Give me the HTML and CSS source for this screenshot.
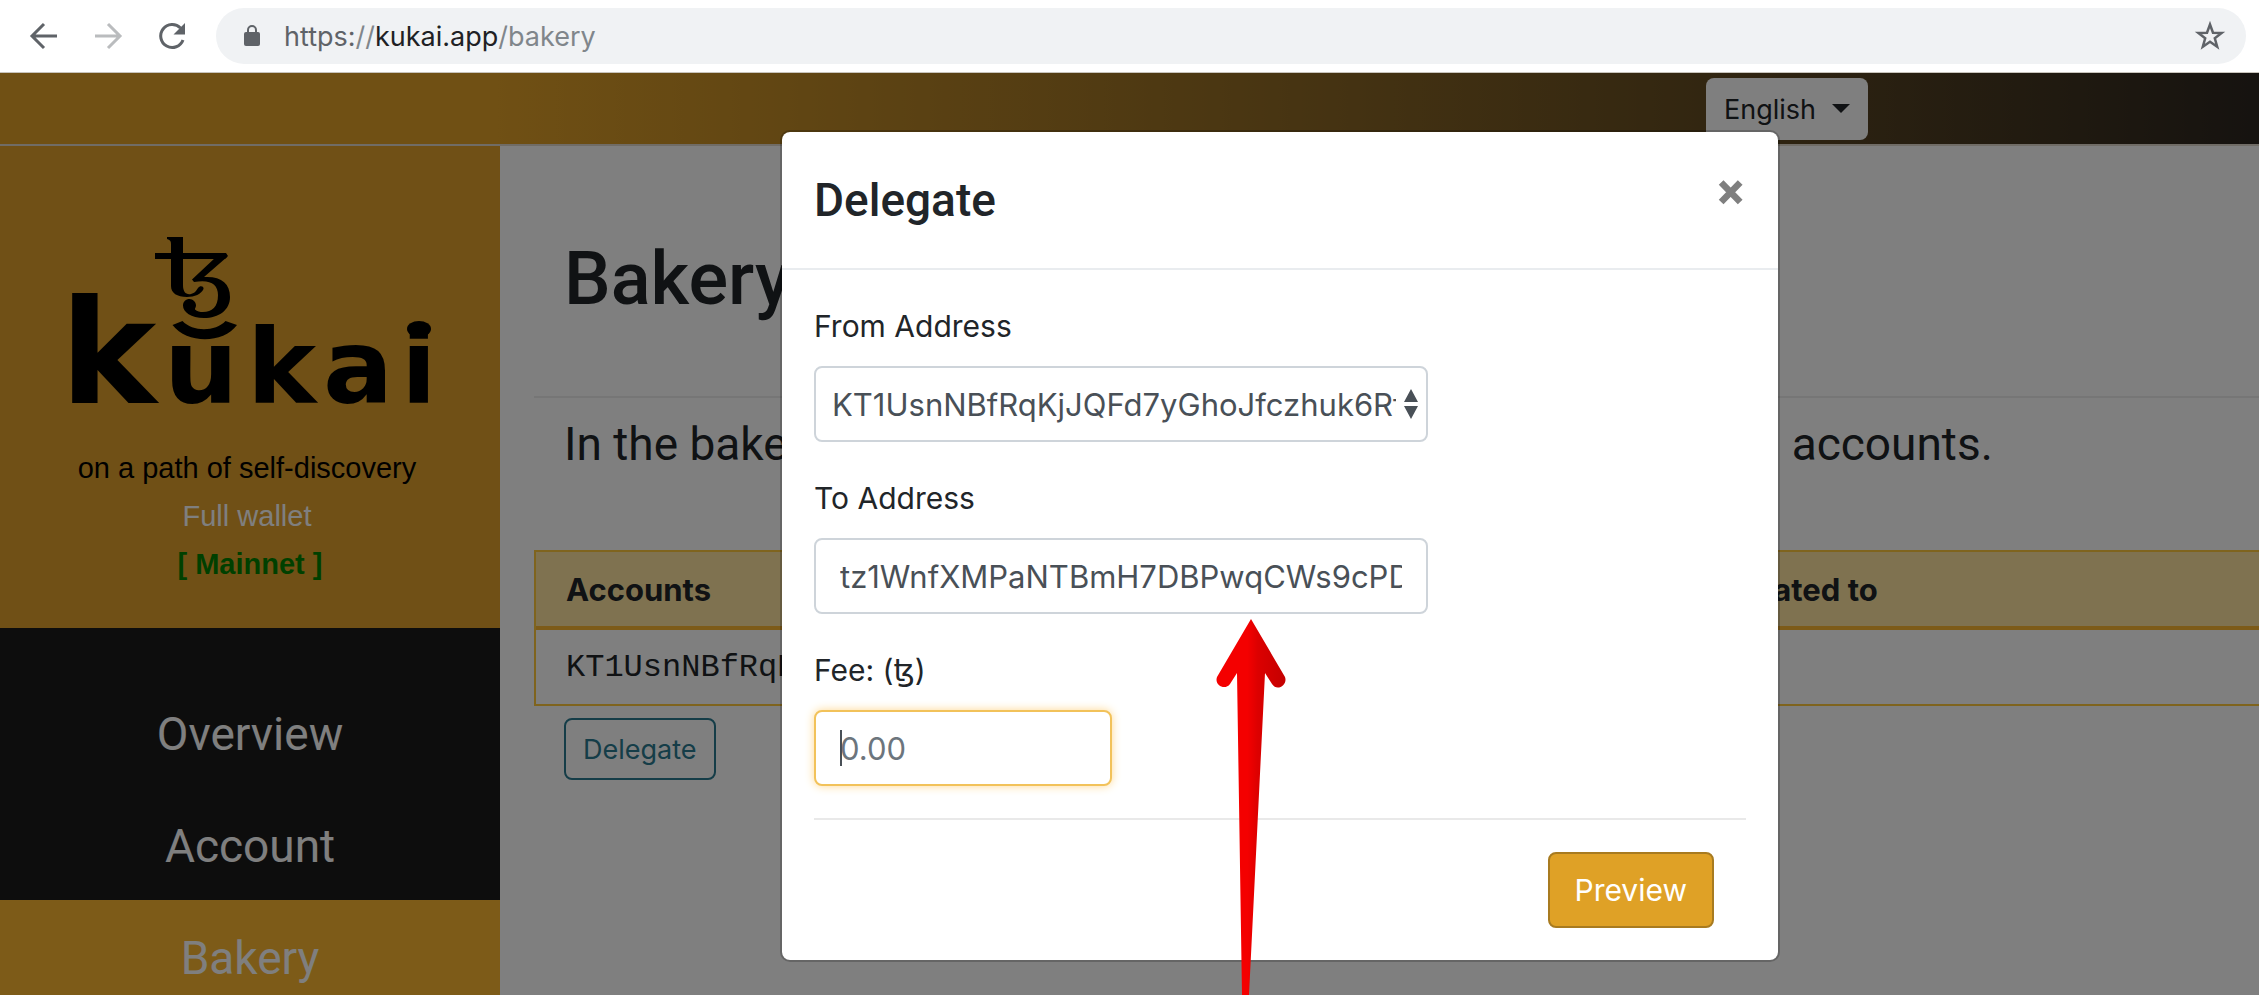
FILE: index.html
```html
<!DOCTYPE html>
<html lang="en">
<head>
    <meta charset="UTF-8">
    <meta name="viewport" content="width=device-width, initial-scale=1.0">
    <title>Kukai - Bakery</title>
    <link rel="stylesheet" href="styles.css">
</head>
<body>
    <div class="toolbar">
        <button class="tool-button" type="button" aria-label="Back">
            <svg width="32" height="32" viewBox="0 0 32 32"><path d="M29 16H4M16 4L4 16l12 12" fill="none" stroke="#5f6368" stroke-width="3"/></svg>
        </button>
        <button class="tool-button" type="button" aria-label="Forward">
            <svg width="32" height="32" viewBox="0 0 32 32"><path d="M3 16h25M16 4l12 12-12 12" fill="none" stroke="#babcbe" stroke-width="3"/></svg>
        </button>
        <button class="tool-button" type="button" aria-label="Reload">
            <svg width="32" height="32" viewBox="0 0 32 32"><path d="M27 20a11.500 11.500 0 1 1-2.500-12" fill="none" stroke="#5f6368" stroke-width="3"/><path d="M29 3v11.500H17.500z" fill="#5f6368"/></svg>
        </button>
        <div class="omnibox">
            <svg width="18" height="24" viewBox="0 0 18 24"><rect x="1" y="8" width="16" height="14" rx="2" fill="#5f6368"/><path d="M5 9V6a4 4 0 0 1 8 0v3" fill="none" stroke="#5f6368" stroke-width="2"/></svg>
            <div class="url">https:<span class="url-path">//</span><span class="url-host">kukai.app</span><span class="url-path">/bakery</span></div>
            <svg width="32" height="32" viewBox="0 0 32 32"><path d="M16 4.500l3 8.200 8.700.3-6.900 5.300 2.400 8.400-7.200-4.900-7.200 4.900 2.400-8.400-6.900-5.300 8.700-.3z" fill="none" stroke="#5f6368" stroke-width="2.500"/></svg>
        </div>
    </div>

    <div class="app">
        <header class="topbar">
            <div class="language">
                <select class="language-select" aria-label="Language">
                    <option>English</option>
                </select>
                <svg class="language-caret" width="18" height="9" viewBox="0 0 18 9"><path d="M0 0h18l-9 9z" fill="#212529"/></svg>
            </div>
        </header>

        <div class="columns">
            <nav class="sidebar">
                <div class="brand">
                    <svg class="logo" width="380" height="186" viewBox="60 226 380 186" role="img">
                        <text class="logo-big" x="60" y="403">k</text>
                        <text class="logo-small" x="164 247 323 401" y="403">ukai</text>
                        <ellipse cx="419" cy="329" rx="12" ry="8"/>
                        <!-- tezos sign -->
                        <path d="M167 237h16v48c0 7 3 10 8 9 4-1 5-3 7-6 2-3 6-2 5.500 1-2 5-9 8-16.500 8-10 0-16-4-16-11v-42c0-3-1-4-4-5z"/>
                        <path d="M155 253h71l2 3-3 3h-70z"/>
                        <path d="M216 257h11l-23 20c17-1 26 6 26 20 0 13-11 21-26 21-13 0-21-6-21-12.500 0-4 3-6.500 6.500-6.500s6.500 3 6.500 6.500c0 2-1.500 3-1 4 2 2 5 2.500 8 2.500 9 0 15-5 15-17 0-11-8-16-24-13l-2-2.500z"/>
                        <path d="M172.500 325l10-4c10 11 33 11 43 0l11.500 4c-14 19-50 19-64.500 0z"/>
                    </svg>
                    <div class="brand-line">on a path of self-discovery</div>
                    <div class="brand-line wallet">Full wallet</div>
                    <div class="network">[ Mainnet ]</div>
                </div>
                <div class="menu">
                    <a class="menu-item" href="#">Overview</a>
                    <a class="menu-item" href="#">Account</a>
                    <a class="menu-item active" href="#">Bakery</a>
                </div>
            </nav>

            <main class="content">
                <h1 class="page-title">Bakery</h1>
                <p class="lead">In the bakery, you can choose any baker to delegate from all accounts.</p>
                <table class="accounts">
                    <thead>
                        <tr><th class="col-account">Accounts</th><th>Delegated to</th></tr>
                    </thead>
                    <tbody>
                        <tr><td>KT1UsnNBfRqKjJQFd7yGhoJfczhuk6Rf</td><td></td></tr>
                    </tbody>
                </table>
                <button class="delegate-button" type="button">Delegate</button>
            </main>
        </div>

        <div class="backdrop"></div>

        <div class="modal" role="dialog" aria-labelledby="modal-title">
            <div class="modal-header">
                <h3 class="modal-title" id="modal-title">Delegate</h3>
                <button class="close" type="button" aria-label="Close">&times;</button>
            </div>
            <form class="modal-body">
                <div class="form-group">
                    <label for="from">From Address</label>
                    <div class="select-box">
                        <select class="form-control from-select" id="from">
                            <option>KT1UsnNBfRqKjJQFd7yGhoJfczhuk6Rf</option>
                        </select>
                        <svg class="select-arrows" width="14" height="30" viewBox="0 0 14 30"><path d="M7 0l7 13H0zM7 30l7-13H0z" fill="#495057"/></svg>
                    </div>
                </div>
                <div class="form-group">
                    <label for="to">To Address</label>
                    <input class="form-control" id="to" type="text" value="tz1WnfXMPaNTBmH7DBPwqCWs9cPDhxkWcsrB">
                </div>
                <div class="form-group">
                    <label for="fee">Fee: (<span class="tez">ꜩ</span>)</label>
                    <div class="fee-box">
                        <input class="form-control focused" id="fee" type="text" placeholder="0.00">
                        <span class="text-cursor"></span>
                    </div>
                </div>
                <div class="modal-footer">
                    <button class="preview-button" type="button">Preview</button>
                </div>
            </form>
        </div>

        <svg class="pointer" width="70" height="376" viewBox="0 0 70 376">
            <defs>
                <linearGradient id="red" x1="0" x2="1">
                    <stop offset="0.450" stop-color="#f40000"/>
                    <stop offset="0.600" stop-color="#dc0000"/>
                    <stop offset="1" stop-color="#c40000"/>
                </linearGradient>
            </defs>
            <path d="M35 0L69 58c3 8-8 15-13 7L49 54 33 376h-7L21 54l-7 11C9 72-2 66 1 58z" fill="url(#red)"/>
        </svg>
    </div>
</body>
</html>
```
FILE: styles.css
```css
* {
    box-sizing: border-box;
}

body {
    display: flex;
    flex-direction: column;
    height: 100vh;
    margin: 0;
    overflow: hidden;
    font-family: Inter, "Liberation Sans", sans-serif;
    font-size: 30px;
    color: #212529;
}

button, input, select {
    font: inherit;
}

/* browser toolbar */
.toolbar {
    display: flex;
    align-items: center;
    gap: 32px;
    padding: 8px 13px 8px 28px;
    border-bottom: 1px solid #c8c4bc;
    background: #fff;
}

.tool-button {
    display: flex;
    padding: 0;
    border: 0;
    background: none;
}

.omnibox {
    display: flex;
    flex: 1;
    align-items: center;
    height: 56px;
    margin-left: -4px;
    padding: 0 20px 0 27px;
    border-radius: 28px;
    background: #f0f2f4;
}

.url {
    flex: 1;
    padding-left: 23px;
    font-size: 27px;
    color: #5f6368;
}

.url-path {
    color: #80868b;
}

.url-host {
    color: #202124;
}

/* page behind the modal */
.app {
    position: relative;
    flex: 1;
    min-height: 0;
    overflow: hidden;
}

.topbar {
    display: flex;
    justify-content: flex-end;
    padding: 5px 391px 4px 0;
    border-bottom: 2px solid #e0d8cc;
    background: linear-gradient(to right, #e0a028 22%, #2c2620);
}

.language {
    position: relative;
}

.language-select {
    width: 162px;
    height: 62px;
    padding: 0 18px;
    border: 0;
    border-radius: 8px;
    background: #fff;
    font-size: 27px;
    color: #212529;
    appearance: none;
}

.language-caret {
    position: absolute;
    top: 26px;
    right: 18px;
}

.columns {
    display: flex;
}

.sidebar {
    flex: none;
    width: 500px;
    background: #1a1a1a;
    text-align: center;
}

.brand {
    padding: 80px 0 40px;
    background: #e0a02c;
    font-family: "Liberation Sans", sans-serif;
    font-size: 29px;
    line-height: 48px;
    color: #000;
}

.logo {
    display: block;
    margin: 0 auto 32px 60px;
    overflow: visible;
    font-family: "DejaVu Sans", sans-serif;
    font-weight: bold;
}

.logo-big {
    font-size: 145px;
}

.logo-small {
    font-size: 104px;
}

.brand-line {
    padding-right: 6px;
}

.wallet {
    color: #fff;
}

.network {
    font-weight: bold;
    color: green;
}

.menu {
    padding-top: 48px;
}

.menu-item {
    display: block;
    padding: 30px 0 26px;
    font-family: Roboto, sans-serif;
    font-size: 46px;
    line-height: 56px;
    color: #fff;
    text-decoration: none;
}

.menu-item.active {
    background: #fab630;
}

.content {
    flex: 1;
    padding: 89px 0 0 34px;
}

.page-title {
    margin: 0;
    padding: 0 0 73px 30px;
    border-bottom: 2px solid #ececec;
    font-family: Roboto, sans-serif;
    font-size: 74px;
    font-weight: 500;
    line-height: 88px;
}

.lead {
    margin: 18px 0 78px;
    padding-left: 30px;
    font-family: Roboto, sans-serif;
    font-size: 46px;
    line-height: 56px;
    white-space: nowrap;
}

.accounts {
    width: 100%;
    border: solid #ffc83c;
    border-width: 2px 0 2px 2px;
    border-spacing: 0;
}

.accounts th, .accounts td {
    height: 74px;
    padding: 0 30px;
    text-align: left;
}

.accounts th {
    height: 78px;
    border-bottom: 4px solid #fab630;
    background: #ffe4a0;
    font-size: 31px;
}

.accounts td {
    font-family: "Liberation Mono", monospace;
    font-size: 32px;
}

.accounts .col-account {
    width: 65%;
}

.delegate-button {
    height: 62px;
    margin: 12px 0 0 30px;
    padding: 0 17px;
    border: 2px solid #2a7a90;
    border-radius: 8px;
    background: none;
    font-size: 27px;
    color: #2a7a90;
}

.backdrop {
    position: absolute;
    inset: 0;
    background: rgba(0, 0, 0, 0.5);
}

/* delegate modal */
.modal {
    position: absolute;
    top: 57px;
    left: 780px;
    width: 1000px;
    border: 2px solid rgba(0, 0, 0, 0.2);
    border-radius: 10px;
    background: #fff;
    background-clip: padding-box;
}

.modal-header {
    display: flex;
    justify-content: space-between;
    align-items: flex-start;
    padding: 32px;
    border-bottom: 2px solid #e9ecef;
}

.modal-title {
    margin: 0;
    font-family: Roboto, sans-serif;
    font-size: 46px;
    font-weight: 500;
    line-height: 72px;
}

.close {
    padding: 0 2px;
    border: 0;
    background: none;
    font-family: Roboto, sans-serif;
    font-size: 50px;
    font-weight: 900;
    line-height: 56px;
    color: #7f7f7f;
}

.modal-body {
    padding: 32px;
}

.form-group {
    margin-bottom: 32px;
}

.form-group label {
    display: block;
    height: 48px;
    margin-bottom: 16px;
    line-height: 48px;
}

.tez {
    font-family: "DejaVu Sans", sans-serif;
    line-height: 1;
}

.form-control {
    width: 614px;
    height: 76px;
    padding: 0 24px;
    border: 2px solid #ced4da;
    border-radius: 8px;
    background: #fff;
    font-size: 31px;
    color: #495057;
    outline: none;
}

.form-control::placeholder {
    color: #6c757d;
}

.select-box, .fee-box {
    position: relative;
}

.from-select {
    padding: 0 30px 0 16px;
    appearance: none;
}

.select-arrows {
    position: absolute;
    top: 23px;
    left: 590px;
}

.focused {
    width: 298px;
    border-color: #f2c25a;
    box-shadow: 0 0 10px #ffd890;
}

.text-cursor {
    position: absolute;
    top: 20px;
    left: 26px;
    width: 2px;
    height: 36px;
    background: #495057;
}

.modal-footer {
    display: flex;
    justify-content: flex-end;
    padding: 32px 32px 0 0;
    border-top: 2px solid #e9e9e9;
}

.preview-button {
    height: 76px;
    padding: 0 25px;
    border: 2px solid #a87b20;
    border-radius: 8px;
    background: #dfa126;
    color: #fff;
}

/* red arrow pointing at the address */
.pointer {
    position: absolute;
    top: 546px;
    left: 1216px;
}
```
